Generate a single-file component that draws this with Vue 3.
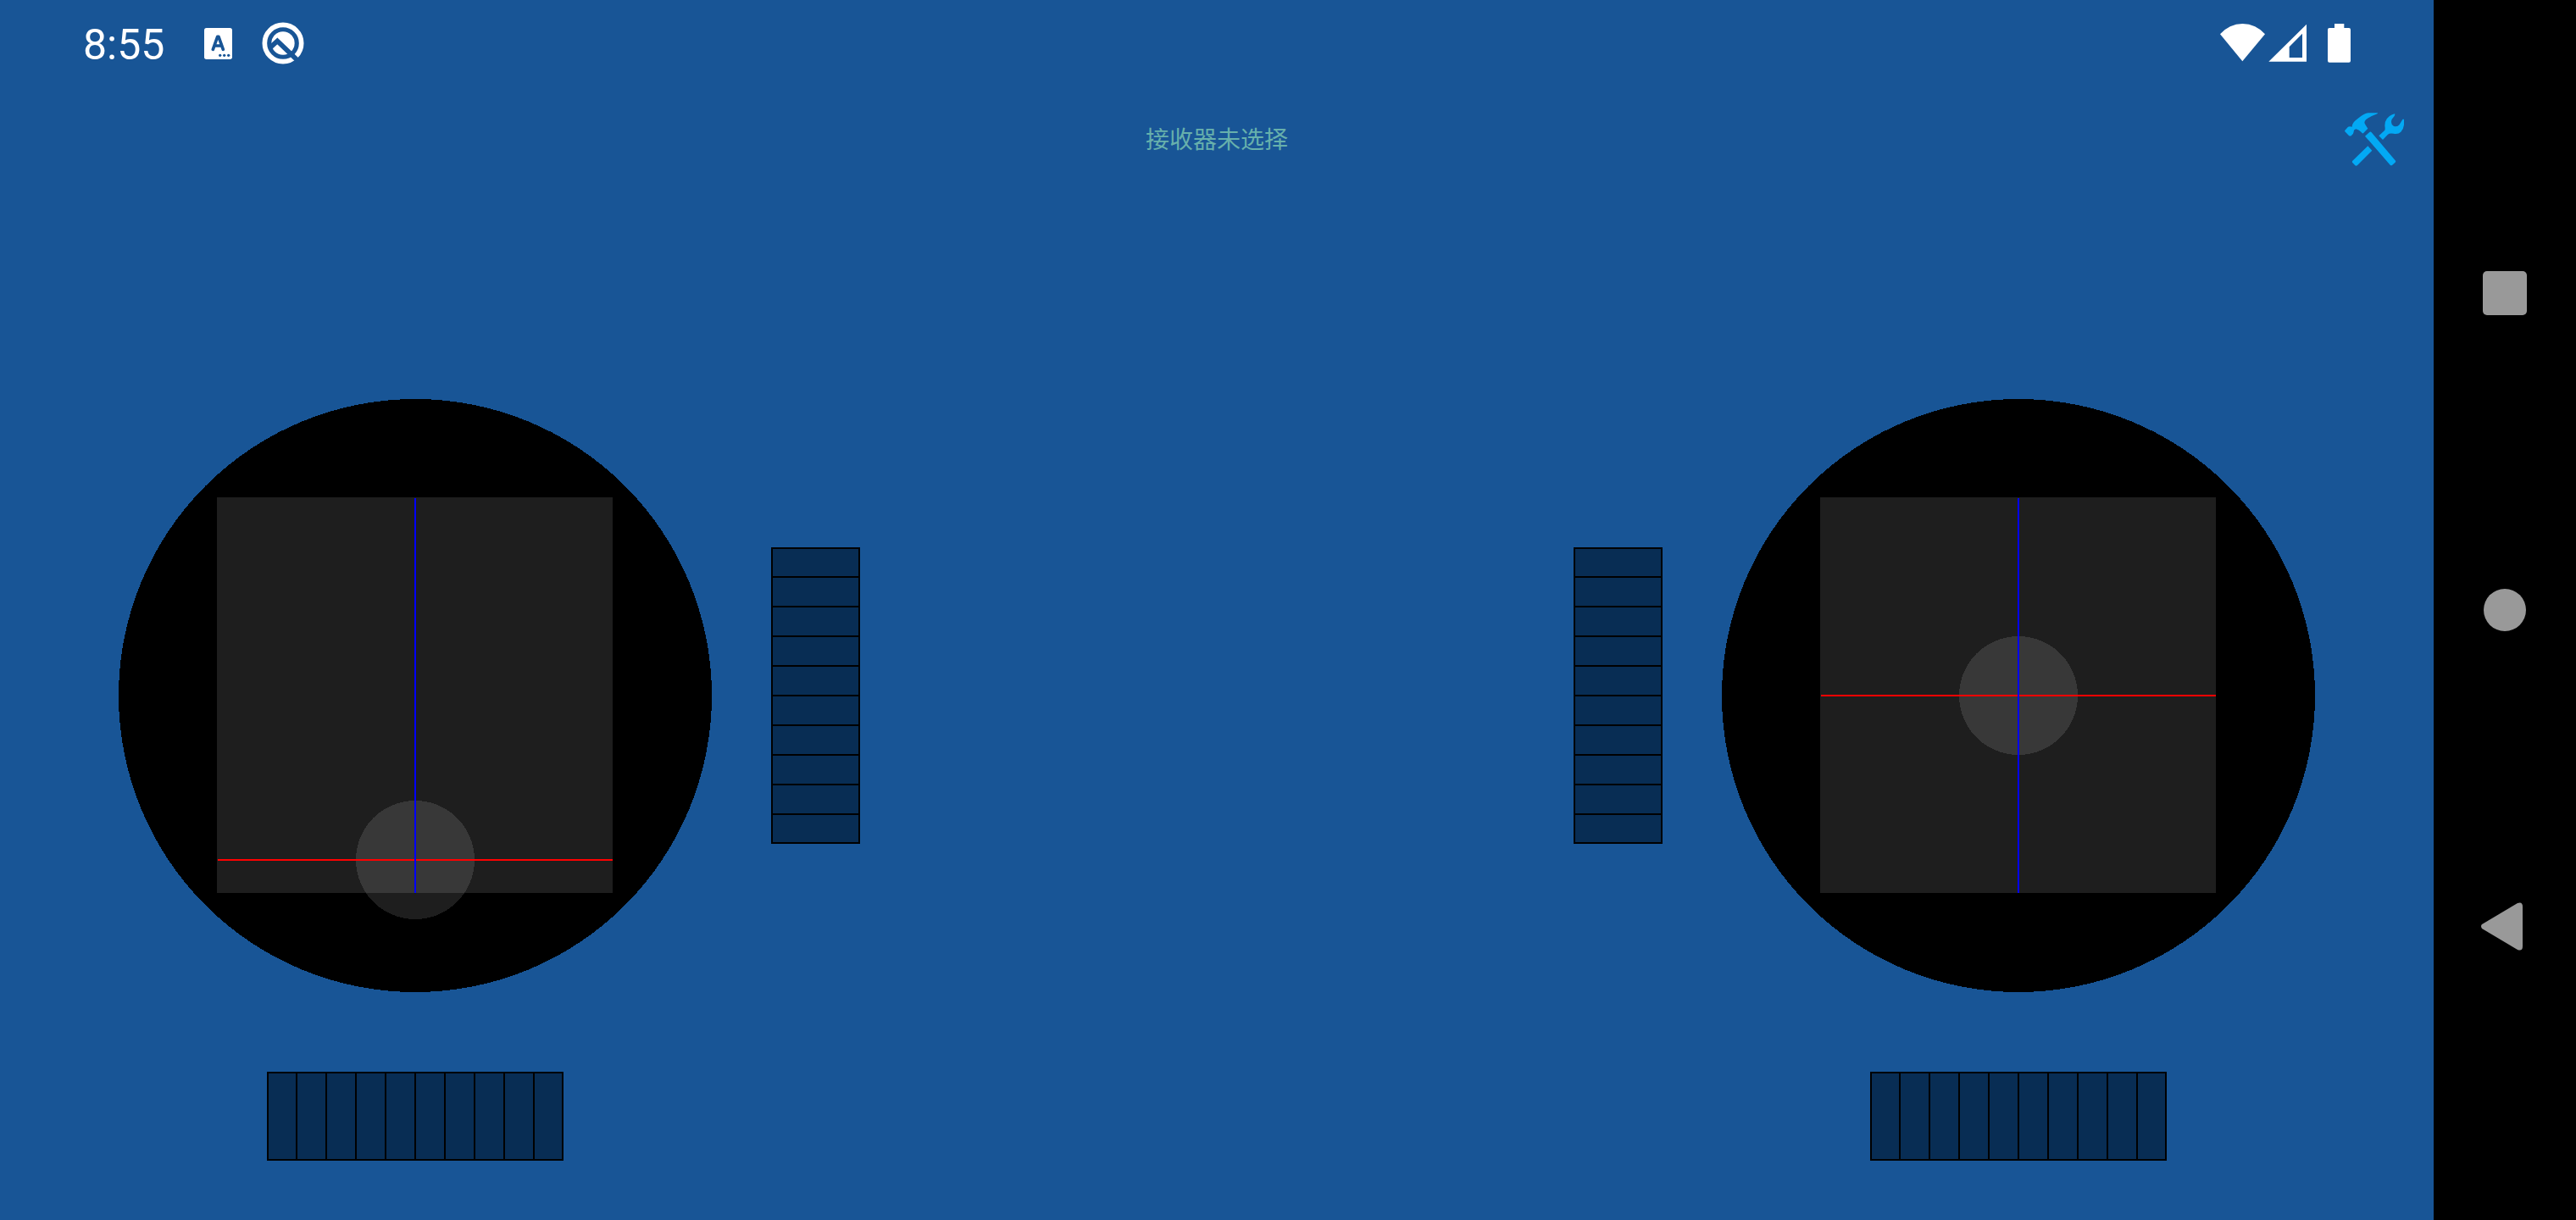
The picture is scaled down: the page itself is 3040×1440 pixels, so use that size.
<script setup>
import { reactive } from 'vue'

const sticks = reactive([
  { id: 'left', name: '左摇杆', x: 350, y: 544, vTrim: 0, hTrim: 0 },
  { id: 'right', name: '右摇杆', x: 350, y: 350, vTrim: 0, hTrim: 0 }
])
</script>

<template>
  <div class="device">
    <main class="screen">
      <div class="status-bar">
        <div class="status-left">
          <time class="clock">8:55</time>
          <svg class="icon-input" viewBox="0 0 99 111" aria-hidden="true">
            <path fill="#fff" fill-rule="evenodd" d="M8 0H91Q99 0 99 8V103Q99 111 91 111H8Q0 111 0 103V8Q0 0 8 0Z" />
            <path class="cut" stroke-width="11" d="M31 76L47 31H51L67 76M37 63H61" />
            <g fill="#185596">
              <circle cx="56" cy="97" r="5" />
              <circle cx="71" cy="97" r="5" />
              <circle cx="86" cy="97" r="5" />
            </g>
          </svg>
          <svg class="icon-q" viewBox="0 0 150 150" aria-hidden="true">
            <circle cx="75" cy="75" r="65" fill="none" stroke="#fff" stroke-width="17" />
            <circle cx="75" cy="75" r="41" fill="#fff" />
            <path class="cut corner" stroke-width="17" d="M28 92L55 67L130 139" />
          </svg>
        </div>
        <div class="status-right">
          <svg class="icon-signals" viewBox="0 0 306 138" aria-hidden="true">
            <path d="M0 37A104 104 0 0 1 159 37L79 133Z" />
            <path fill-rule="evenodd" d="M172 134L306 2V134ZM245 82V120H291V35Z" />
          </svg>
          <svg class="icon-battery" viewBox="0 0 81 138" aria-hidden="true">
            <path d="M24 0H58V15H75Q81 15 81 21V131Q81 137 75 137H6Q0 137 0 131V21Q0 15 6 15H24Z" />
          </svg>
        </div>
      </div>

      <header class="toolbar">
        <p class="receiver">接收器未选择</p>
        <button class="settings" type="button" aria-label="设置">
          <svg viewBox="0 0 210 189" aria-hidden="true">
            <path d="M0 64L12 50Q18 47 26 50Q26 39 38 28Q60 9 74 3Q80 1 84 1L117 1Q118 3 110 6Q88 14 76 24Q68 32 71 38Q74 44 82 56L66 73Q62 74 58 68Q50 60 40 58Q31 60 32 68Q32 73 23 82Q18 84 14 80L1 67Z" />
            <path d="M72 83L89 68Q92 66 95 70L180 170Q182 174 178 177L168 186Q164 188 161 185Z" />
            <path d="M121 82L142 62Q144 59 142 46Q142 18 168 7L177 4Q179 6 176 12L167 23Q161 40 173 47Q186 52 194 42L205 24Q208 21 210 25Q213 54 199 68Q190 77 173 74Q158 72 153 77L135 96Z" />
            <path d="M82 118L97 134L46 185Q41 190 37 187L27 176Q26 172 28 170Z" />
          </svg>
        </button>
      </header>

      <div class="controls">
        <section
          v-for="stick in sticks"
          :key="stick.id"
          class="station"
          :class="stick.id"
          :aria-label="stick.name"
        >
          <svg class="stick" viewBox="0 0 700 700" role="img" :aria-label="stick.name">
            <circle cx="350" cy="350" r="350" fill="#000" />
            <rect x="116" y="116" width="467" height="467" fill="#1e1e1e" />
            <circle :cx="stick.x" :cy="stick.y" r="70" fill="#fff" fill-opacity="0.118" />
            <rect x="117" :y="stick.y - 1" width="466" height="2" fill="#f00" />
            <rect :x="stick.x - 1" y="117" width="2" height="466" fill="#00f" />
          </svg>
          <input
            v-model.number="stick.vTrim"
            class="trim trim-v"
            type="range"
            min="-5"
            max="5"
            :aria-label="stick.name + '垂直微调'"
          />
          <input
            v-model.number="stick.hTrim"
            class="trim trim-h"
            type="range"
            min="-5"
            max="5"
            :aria-label="stick.name + '水平微调'"
          />
        </section>
      </div>
    </main>

    <nav class="nav-bar">
      <button type="button" aria-label="最近任务">
        <svg viewBox="0 0 60 60"><rect x="4" y="4" width="52" height="52" rx="5" /></svg>
      </button>
      <button type="button" aria-label="主屏幕">
        <svg viewBox="0 0 60 60"><circle cx="30" cy="30" r="25" /></svg>
      </button>
      <button type="button" aria-label="返回">
        <svg viewBox="0 0 60 60"><path d="M3 27L45 2Q51 0 51 6V53Q51 59 45 57L3 32Q1 29 3 27Z" /></svg>
      </button>
    </nav>
  </div>
</template>

<style>
body {
  margin: 0;
}
</style>

<style scoped>
.device {
  display: grid;
  grid-template-columns: 1fr 168px;
  min-height: 100vh;
  background: #185596;
  font-family: Roboto, "Noto Sans CJK SC", sans-serif;
}

svg {
  display: block;
}

button {
  padding: 0;
  border: 0;
  background: none;
  cursor: pointer;
}

.screen {
  display: flex;
  flex-direction: column;
}

.status-bar {
  display: flex;
  justify-content: space-between;
  align-items: center;
  height: 102px;
  padding: 0 98px;
  color: #fff;
}

.status-left,
.status-right {
  display: flex;
  align-items: center;
}

.status-right {
  gap: 25px;
  fill: #fff;
}

.clock {
  padding-top: 4px;
  font-size: 50px;
  line-height: 56px;
}

.icon-input {
  width: 33px;
  height: 37px;
  margin: 0 35px 0 47px;
}

.icon-q {
  width: 50px;
  height: 50px;
}

.cut {
  fill: none;
  stroke: #185596;
  stroke-linecap: round;
  stroke-linejoin: round;
}

.corner {
  stroke-linecap: butt;
  stroke-linejoin: miter;
}

.icon-signals {
  width: 102px;
  height: 46px;
}

.icon-battery {
  width: 27px;
  height: 46px;
}

.toolbar {
  display: grid;
  grid-template-columns: 1fr auto 1fr;
  align-items: center;
  height: 124px;
  padding: 0 35px;
}

.receiver {
  grid-column: 2;
  margin: 0;
  padding-top: 4px;
  color: #67b0ac;
  font-size: 28px;
  line-height: 40px;
}

.settings {
  justify-self: end;
}

.settings svg {
  width: 70px;
  height: 63px;
  fill: #03a9f4;
}

.controls {
  display: flex;
  justify-content: space-between;
  margin-top: auto;
  padding: 0 140px 70px;
}

.station {
  display: grid;
  grid-template-columns: auto auto;
  gap: 94px 70px;
  place-items: center;
}

.right .stick {
  order: 1;
}

.right .trim-h {
  order: 2;
  grid-column: 2;
}

.stick {
  width: 700px;
  height: 700px;
  shape-rendering: crispEdges;
}

.trim {
  appearance: none;
  box-sizing: border-box;
  margin: 0;
  border: 2px solid #000;
  background-color: #082d54;
  background-origin: border-box;
}

.trim-h {
  width: 350px;
  height: 105px;
  background-image: repeating-linear-gradient(to right, #000 0 1px, transparent 1px 34px, #000 34px 35px);
}

.trim-v {
  writing-mode: vertical-lr;
  width: 105px;
  height: 350px;
  background-image: repeating-linear-gradient(to bottom, #000 0 1px, transparent 1px 34px, #000 34px 35px);
}

.trim::-webkit-slider-thumb {
  appearance: none;
  width: 33px;
  height: 33px;
  background: transparent;
}

.nav-bar {
  display: flex;
  flex-direction: column;
  padding: 159px 0;
  background: #000;
}

.nav-bar button {
  display: flex;
  flex: 1;
  align-items: center;
  justify-content: center;
}

.nav-bar svg {
  width: 60px;
  height: 60px;
  fill: #999;
}
</style>
